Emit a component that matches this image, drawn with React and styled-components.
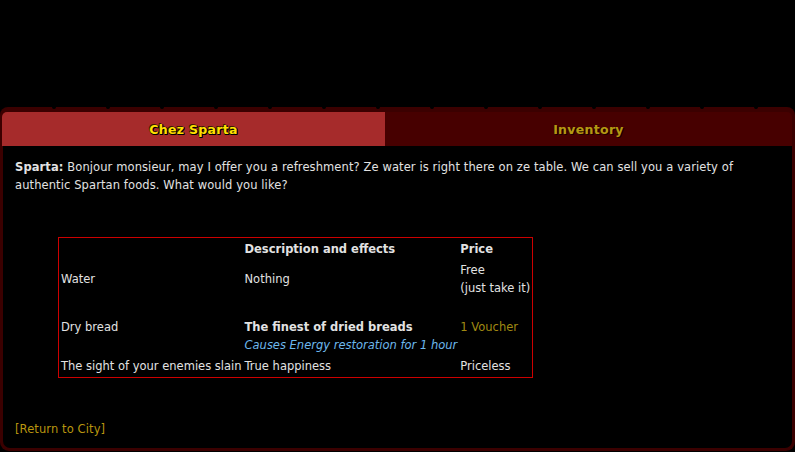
import React from 'react';
import styled, { createGlobalStyle } from 'styled-components';

const GlobalStyle = createGlobalStyle`
	html, body {
		margin: 0;
		padding: 0;
		background: #000;
	}
	body {
		font-family: "DejaVu Sans", Verdana, sans-serif;
		font-size: 11.5px;
		letter-spacing: 0.1px;
		color: #e2e2e2;
	}
`;

const Page = styled.div`
	width: 795px;
	height: 452px;
	padding-top: 107px;
	box-sizing: border-box;
	overflow: hidden;
`;

const Frame = styled.div`
	height: 344px;
	display: flex;
	flex-direction: column;
	background: #3b0000;
	border-radius: 8px 8px 9px 9px;
	padding: 0 3px 3px 2px;
	box-sizing: border-box;
`;

const Scallops = styled.div`
	height: 5px;
	flex: none;
	margin: 0 -3px 0 -2px;
	background:
		radial-gradient(circle at 50% 0, #000 0 1.5px, transparent 2.5px) -27px 0 / 54px 5px repeat-x;
`;

const TabBar = styled.div`
	display: flex;
	height: 34px;
	flex: none;
`;

const Tab = styled.div`
	flex: ${(p) => (p.$active ? '0 0 383px' : '1')};
	display: flex;
	align-items: center;
	justify-content: center;
	background: ${(p) => (p.$active ? '#a62b2b' : '#470000')};
	border-radius: ${(p) => (p.$active ? '5px 0 0 0' : '0 5px 0 0')};
	font-weight: bold;
	font-size: 12.5px;
	letter-spacing: 0.3px;
	color: ${(p) => (p.$active ? '#ffe000' : '#b49a12')};
	text-shadow: ${(p) =>
		p.$active
			? '1px 1px 0 #000, -1px -1px 0 #3a1a00, 1px 0 0 #000, 0 1px 0 #000'
			: '1px 1px 0 #1a0000'};
`;

const Content = styled.div`
	flex: 1;
	display: flex;
	flex-direction: column;
	align-items: flex-start;
	background: #000;
	margin-left: 1px;
	border-radius: 0 0 7px 7px;
	padding: 12px 0 10px 12px;
	line-height: 18px;
`;

const Intro = styled.p`
	margin: 0;
	width: 740px;
	b {
		font-weight: bold;
	}
`;

const ShopTable = styled.table`
	margin: 43px 0 0 43px;
	border: 1px solid #cc0000;
	border-spacing: 1px;
	border-collapse: separate;
	line-height: 18px;
	letter-spacing: 0;
	td,
	th {
		padding: 1px;
		text-align: left;
		vertical-align: middle;
		white-space: nowrap;
		font-weight: normal;
	}
	th {
		font-weight: bold;
	}
`;

const NameCell = styled.td`
	width: 180px;
`;

const DescCell = styled.td`
	width: 211px;
`;

const PriceCell = styled.td`
	width: 69px;
	color: ${(p) => (p.$voucher ? '#a08a12' : '#e2e2e2')};
`;

const Strong = styled.div`
	font-weight: bold;
`;

const Effect = styled.div`
	font-style: italic;
	color: #6db8ec;
`;

const Spacer = styled.div`
	height: 18px;
`;

const ReturnLink = styled.a`
	margin-top: auto;
	color: #b8950f;
	text-decoration: none;
	cursor: pointer;
`;

const items = [
	{ name: 'Water', desc: 'Nothing', price: ['Free', '(just take it)'] },
	{
		name: 'Dry bread',
		desc: 'The finest of dried breads',
		effect: 'Causes Energy restoration for 1 hour',
		price: ['1 Voucher'],
		voucher: true,
	},
	{ name: 'The sight of your enemies slain', desc: 'True happiness', price: ['Priceless'] },
];

const App = () => {
	return (
		<>
			<GlobalStyle />
			<Page>
				<Frame>
					<Scallops />
					<TabBar>
						<Tab $active>Chez Sparta</Tab>
						<Tab>Inventory</Tab>
					</TabBar>
					<Content>
						<Intro>
							<b>Sparta:</b> Bonjour monsieur, may I offer you a refreshment? Ze water is right there on ze
							table. We can sell you a variety of authentic Spartan foods. What would you like?
						</Intro>
						<ShopTable>
							<thead>
								<tr>
									<th></th>
									<th>Description and effects</th>
									<th>Price</th>
								</tr>
							</thead>
							<tbody>
								{items.map((item) => (
									<tr key={item.name}>
										<NameCell>{item.name}</NameCell>
										<DescCell>
											{item.effect ? (
												<>
													<Spacer />
													<Strong>{item.desc}</Strong>
													<Effect>{item.effect}</Effect>
												</>
											) : (
												item.desc
											)}
										</DescCell>
										<PriceCell $voucher={item.voucher}>
											{item.price.map((p) => (
												<div key={p}>{p}</div>
											))}
										</PriceCell>
									</tr>
								))}
							</tbody>
						</ShopTable>
						<ReturnLink>[Return to City]</ReturnLink>
					</Content>
				</Frame>
			</Page>
		</>
	);
};

export default App;
